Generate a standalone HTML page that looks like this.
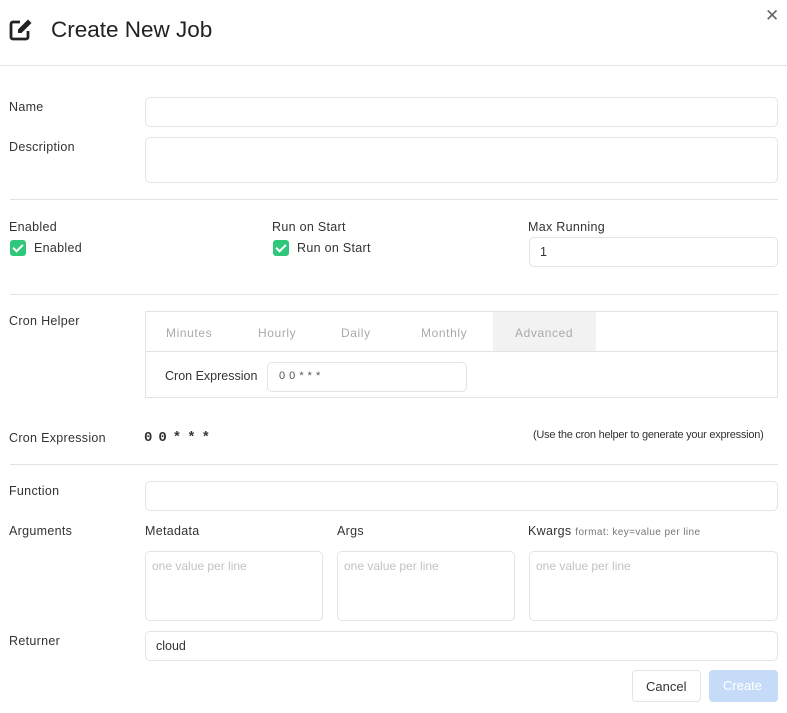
<!DOCTYPE html>
<html><head><meta charset="utf-8"><style>
*{box-sizing:border-box;margin:0;padding:0}
body{width:787px;height:713px;background:#fff;font-family:"Liberation Sans",sans-serif;color:#333;position:relative;overflow:hidden}
.a{position:absolute}
.lbl{font-size:12.5px;color:#333;letter-spacing:.3px}
.inp{position:absolute;border:1px solid #e3e3e3;border-radius:5px;background:#fff}
.hr{position:absolute;left:10px;right:9px;height:1px;background:#e3e3e3}
.ph{font-size:12px;color:#c2c2c2;position:absolute;left:6px;top:7px}
.cb{position:absolute;width:16px;height:16px;border-radius:3px;background:#2fc77a}
.cb:after{content:"";position:absolute;left:5px;top:2px;width:4px;height:8px;border:solid #fff;border-width:0 2px 2px 0;transform:rotate(45deg)}
.tab{position:absolute;top:326px;font-size:12px;color:#aaa;letter-spacing:.6px}
</style></head><body>
<svg class="a" style="left:9px;top:19px" width="24" height="22" viewBox="0 0 24 22"><path d="M11 3H4a2 2 0 0 0-2 2v13a2 2 0 0 0 2 2h13a2 2 0 0 0 2-2v-6" fill="none" stroke="#222" stroke-width="2.8"/><path d="M19 0.5l3.5 3.5-10 10H9v-3.5z" fill="#222"/></svg>
<div class="a" style="left:51px;top:17px;font-size:22.5px;color:#222">Create New Job</div>
<div class="a" style="left:765px;top:6px;font-size:17px;color:#666">✕</div>
<div class="a" style="left:0;right:0;top:65px;height:1px;background:#e3e3e3"></div>
<div class="a lbl" style="left:9px;top:100px">Name</div>
<div class="inp" style="left:145px;top:97px;width:633px;height:30px"></div>
<div class="a lbl" style="left:9px;top:140px">Description</div>
<div class="inp" style="left:145px;top:137px;width:633px;height:46px"></div>
<div class="hr" style="top:199px"></div>
<div class="a lbl" style="left:9px;top:220px">Enabled</div>
<div class="cb" style="left:10px;top:240px"></div>
<div class="a lbl" style="left:34px;top:241px">Enabled</div>
<div class="a lbl" style="left:272px;top:220px">Run on Start</div>
<div class="cb" style="left:273px;top:240px"></div>
<div class="a lbl" style="left:297px;top:241px">Run on Start</div>
<div class="a lbl" style="left:528px;top:220px">Max Running</div>
<div class="inp" style="left:529px;top:237px;width:249px;height:30px"><span class="a" style="left:10px;top:7px;font-size:12.5px;color:#333">1</span></div>
<div class="hr" style="top:294px"></div>
<div class="a lbl" style="left:9px;top:314px">Cron Helper</div>
<div class="a" style="left:145px;top:311px;width:633px;height:87px;border:1px solid #e3e3e3"></div>
<div class="a" style="left:493px;top:312px;width:103px;height:40px;background:#f2f2f2"></div>
<div class="a" style="left:146px;top:351px;width:631px;height:1px;background:#e3e3e3"></div>
<div class="tab" style="left:166px">Minutes</div>
<div class="tab" style="left:258px">Hourly</div>
<div class="tab" style="left:341px">Daily</div>
<div class="tab" style="left:421px">Monthly</div>
<div class="tab" style="left:515px">Advanced</div>
<div class="a" style="left:165px;top:369px;font-size:12.5px;color:#333">Cron Expression</div>
<div class="inp" style="left:267px;top:362px;width:200px;height:30px"><span class="a" style="left:11px;top:7px;font-size:11px;color:#555;letter-spacing:.5px">0 0 * * *</span></div>
<div class="a lbl" style="left:9px;top:431px">Cron Expression</div>
<div class="a" style="left:144px;top:430px;font-family:'Liberation Mono',monospace;font-size:14px;font-weight:bold;color:#333;letter-spacing:-1.2px">0 0 * * *</div>
<div class="a" style="left:533px;top:429px;font-size:11px;color:#333;letter-spacing:-.25px">(Use the cron helper to generate your expression)</div>
<div class="hr" style="top:464px"></div>
<div class="a lbl" style="left:9px;top:484px">Function</div>
<div class="inp" style="left:145px;top:481px;width:633px;height:30px"></div>
<div class="a lbl" style="left:9px;top:524px">Arguments</div>
<div class="a lbl" style="left:145px;top:524px">Metadata</div>
<div class="a lbl" style="left:337px;top:524px">Args</div>
<div class="a lbl" style="left:528px;top:524px">Kwargs <span style="font-size:10px;color:#777;letter-spacing:.4px">format: key=value per line</span></div>
<div class="inp" style="left:145px;top:551px;width:178px;height:70px"><span class="ph">one value per line</span></div>
<div class="inp" style="left:337px;top:551px;width:178px;height:70px"><span class="ph">one value per line</span></div>
<div class="inp" style="left:529px;top:551px;width:249px;height:70px"><span class="ph">one value per line</span></div>
<div class="a lbl" style="left:9px;top:634px">Returner</div>
<div class="inp" style="left:145px;top:631px;width:633px;height:30px"><span class="a" style="left:10px;top:7px;font-size:12.5px;color:#333">cloud</span></div>
<div class="inp" style="left:632px;top:670px;width:69px;height:32px;border-radius:4px"><span class="a" style="left:13px;top:8px;font-size:13px;color:#333">Cancel</span></div>
<div class="a" style="left:709px;top:670px;width:69px;height:32px;border-radius:4px;background:#c5dbf7"><span class="a" style="left:14px;top:8px;font-size:13px;color:#fff">Create</span></div>
</body></html>
